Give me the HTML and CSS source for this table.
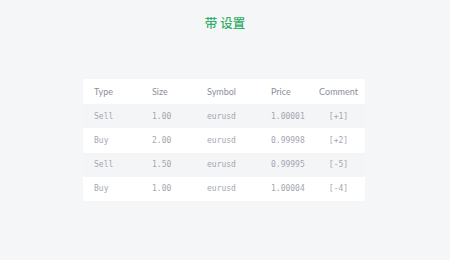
FILE: index.html
```html
<!DOCTYPE html>
<html>
<head>
<meta charset="utf-8">
<link rel="stylesheet" href="styles.css">
</head>
<body>
<div class="page">
  <h1 class="title">带 设置</h1>
  <div class="table">
    <div class="row head">
      <div class="cell">Type</div>
      <div class="cell">Size</div>
      <div class="cell">Symbol</div>
      <div class="cell">Price</div>
      <div class="cell center">Comment</div>
    </div>
    <div class="row stripe">
      <div class="cell">Sell</div>
      <div class="cell">1.00</div>
      <div class="cell">eurusd</div>
      <div class="cell">1.00001</div>
      <div class="cell center">[+1]</div>
    </div>
    <div class="row">
      <div class="cell">Buy</div>
      <div class="cell">2.00</div>
      <div class="cell">eurusd</div>
      <div class="cell">0.99998</div>
      <div class="cell center">[+2]</div>
    </div>
    <div class="row stripe">
      <div class="cell">Sell</div>
      <div class="cell">1.50</div>
      <div class="cell">eurusd</div>
      <div class="cell">0.99995</div>
      <div class="cell center">[-5]</div>
    </div>
    <div class="row">
      <div class="cell">Buy</div>
      <div class="cell">1.00</div>
      <div class="cell">eurusd</div>
      <div class="cell">1.00004</div>
      <div class="cell center">[-4]</div>
    </div>
  </div>
</div>
</body>
</html>
```
FILE: styles.css
```css
html, body {
  margin: 0;
  padding: 0;
  background: #f5f6f8;
}
.page {
  width: 450px;
  height: 260px;
  display: flex;
  flex-direction: column;
  align-items: center;
  padding-top: 13px;
  box-sizing: border-box;
}
.title {
  margin: 0;
  font-family: "Noto Sans CJK SC", sans-serif;
  font-size: 12.5px;
  line-height: 20px;
  font-weight: 500;
  color: #36ad6c;
}
.table {
  margin-top: 46px;
  margin-right: 2px;
  width: 282px;
  background: #ffffff;
  display: flex;
  flex-direction: column;
}
.row {
  display: grid;
  grid-template-columns: 58px 55px 64px 51px 54px;
  height: 24.25px;
  align-items: center;
  font-family: "DejaVu Sans Mono", monospace;
  font-size: 8px;
  color: #a3a7ae;
}
.row.head {
  height: 25px;
  font-family: "Lato", sans-serif;
  font-size: 9px;
  color: #8c9099;
}
.row.stripe {
  background: #f4f5f7;
}
.cell {
  padding-left: 11px;
  white-space: nowrap;
}
.cell.center {
  padding-left: 1px;
  text-align: center;
}
```
